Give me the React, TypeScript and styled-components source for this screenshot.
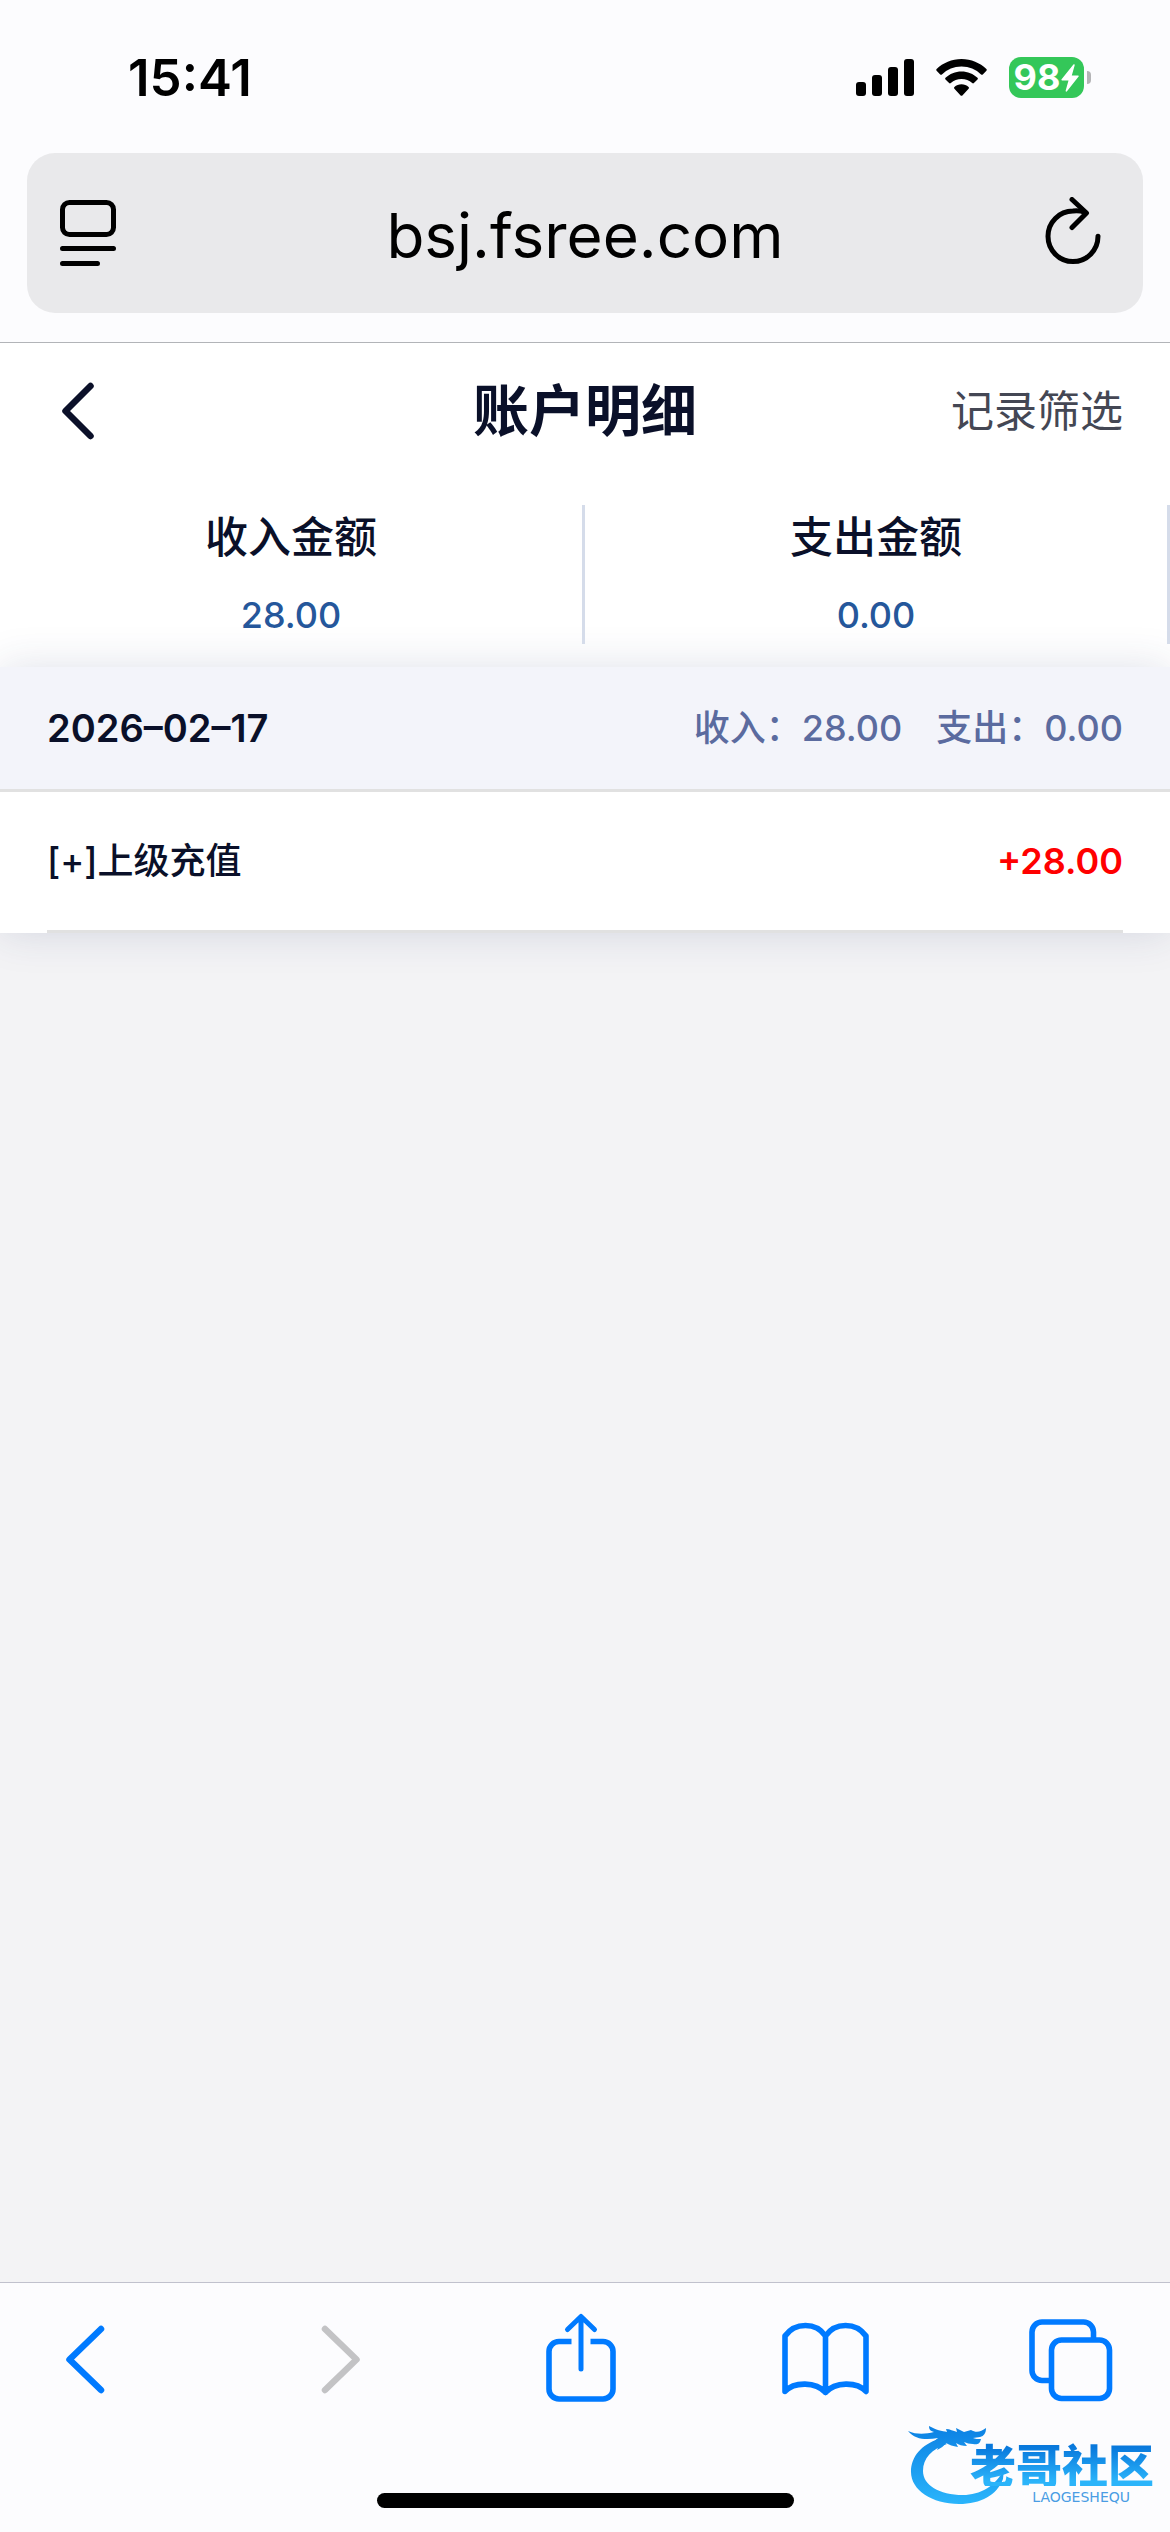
import React from "react";
import styled, { createGlobalStyle } from "styled-components";

const GlobalStyle = createGlobalStyle`
  *, *::before, *::after { box-sizing: border-box; }
  body {
    margin: 0;
    background: #f3f3f5;
    font-family: Inter, "Noto Sans CJK SC", sans-serif;
    color: #0a1029;
  }
  button, input {
    font: inherit;
    color: inherit;
    border: 0;
    padding: 0;
    margin: 0;
    background: none;
  }
  button { cursor: pointer; }
  svg { display: block; }
`;

const Screen = styled.div`
  position: relative;
  display: flex;
  flex-direction: column;
  min-height: 100vh;
`;

const BrowserTop = styled.header`
  background: #fcfcfe;
  border-bottom: 1px solid #b2b4b8;
  padding: 0 27px 29px;
`;

const StatusBar = styled.div`
  display: flex;
  align-items: center;
  justify-content: space-between;
  height: 153px;
  padding: 2px 52px 0 101px;
  color: #000;
`;

const Time = styled.time`
  font-size: 51px;
  line-height: 60px;
  font-weight: 600;
`;

const StatusIcons = styled.div`
  display: flex;
  align-items: center;
  gap: 22px;
`;

const BatteryWrap = styled.div`
  display: flex;
  align-items: center;
  gap: 3px;
`;

const Battery = styled.div`
  display: flex;
  align-items: center;
  justify-content: center;
  gap: 1px;
  width: 75px;
  height: 41px;
  border-radius: 12px;
  background: #34c759;
  color: #fff;
  font-size: 36px;
  line-height: 41px;
  font-weight: 700;
`;

const BatteryNub = styled.div`
  width: 4px;
  height: 13px;
  border-radius: 0 4px 4px 0;
  background: #b4b4b6;
`;

const AddressBar = styled.div`
  display: flex;
  align-items: center;
  height: 160px;
  padding: 0 42px 0 33px;
  border-radius: 28px;
  background: #e9e9eb;
  color: #000;
`;

const Address = styled.input`
  flex: 1;
  min-width: 0;
  height: 100px;
  padding: 4px 0 0 9px;
  font-size: 62px;
  line-height: 96px;
  text-align: center;
  outline: none;
`;

const Main = styled.main`
  flex: 1;
  background: #f3f3f5;
`;

const Top = styled.div`
  background: #fff;
`;

const PageHeader = styled.div`
  display: grid;
  grid-template-columns: 1fr auto 1fr;
  align-items: center;
  height: 136px;
  padding: 0 47px;
`;

const BackButton = styled.button`
  justify-self: start;
  padding-left: 14px;
`;

const Title = styled.h1`
  margin: 0;
  font-size: 56px;
  line-height: 72px;
  font-weight: 600;
`;

const FilterButton = styled.button`
  justify-self: end;
  font-size: 43px;
  line-height: 60px;
  color: #444754;
`;

const Stats = styled.dl`
  display: grid;
  grid-template-columns: 1fr 1fr;
  margin: 0;
  padding: 26px 0 23px;
`;

const Stat = styled.div`
  display: flex;
  flex-direction: column;
  align-items: center;
  gap: 30px;
  padding: 8px 0 5px;
  border-right: 3px solid #d5dcea;
`;

const StatLabel = styled.dt`
  font-size: 43px;
  line-height: 48px;
  font-weight: 500;
`;

const StatValue = styled.dd`
  margin: 0;
  font-size: 36px;
  line-height: 48px;
  font-weight: 500;
  color: #25579b;
`;

const DayCard = styled.section`
  background: #fff;
  box-shadow: 0 0 40px rgba(43, 57, 105, 0.15);
`;

const DayHeader = styled.div`
  display: flex;
  align-items: center;
  justify-content: space-between;
  height: 125px;
  padding: 0 47px;
  border-bottom: 3px solid #e1e1e1;
  background: #f3f4fa;
  font-size: 36px;
  line-height: 48px;
`;

const DayDate = styled.h2`
  margin: 0;
  font-size: 38px;
  font-weight: 600;
`;

const DayTotals = styled.div`
  display: flex;
  gap: 34px;
  font-weight: 500;
  color: #5b6b9f;
`;

const Records = styled.ul`
  margin: 0;
  padding: 0 47px;
  list-style: none;
`;

const RecordRow = styled.li`
  display: flex;
  align-items: center;
  justify-content: space-between;
  height: 141px;
  border-bottom: 3px solid #e1e1e1;
  font-size: 36px;
  line-height: 48px;
  font-weight: 500;
`;

const Amount = styled.span`
  font-weight: 600;
  color: #ff0000;
`;

const BrowserBottom = styled.footer`
  display: flex;
  flex-direction: column;
  align-items: center;
  justify-content: space-between;
  height: 250px;
  padding: 27px 0 24px;
  border-top: 1px solid #c0c1cd;
  background: #fcfcfe;
`;

const Toolbar = styled.nav`
  display: flex;
  align-self: stretch;
  justify-content: space-between;
  padding: 0 54px 0 40px;
`;

const ToolButton = styled.button<{ $muted?: boolean }>`
  color: ${(p) => (p.$muted ? "#c3c3c5" : "#007aff")};
`;

const HomeIndicator = styled.div`
  width: 417px;
  height: 15px;
  border-radius: 8px;
  background: #000;
`;

const Watermark = styled.div`
  position: absolute;
  right: 16px;
  bottom: 26px;
  width: 246px;
  height: 84px;
`;

const Dragon = styled.svg`
  position: absolute;
  left: 0;
  top: 0;
`;

const Brand = styled.div`
  position: relative;
  display: flex;
  flex-direction: column;
  align-items: flex-end;
  padding-top: 18px;
`;

const BrandName = styled.strong`
  font-family: "Noto Sans CJK SC", sans-serif;
  font-size: 46px;
  line-height: 46px;
  font-weight: 900;
  color: transparent;
  background: linear-gradient(#0878dc 15%, #2bb4fa 90%);
  background-clip: text;
  -webkit-background-clip: text;
`;

const BrandCaption = styled.span`
  padding: 4px 24px 0 0;
  font-family: "DejaVu Sans", sans-serif;
  font-size: 14px;
  line-height: 14px;
  color: #4a9de4;
`;

const SignalIcon = () => (
  <svg width="58" height="37" viewBox="0 0 58 37" fill="currentColor">
    <rect x="0" y="23" width="10" height="14" rx="3" />
    <rect x="16" y="16" width="10" height="21" rx="3" />
    <rect x="32" y="8" width="10" height="29" rx="3" />
    <rect x="48" y="0" width="10" height="37" rx="3" />
  </svg>
);

const WifiIcon = () => (
  <svg width="51" height="37" viewBox="0 0 51 37" fill="currentColor">
    <path d="M25.5 0C35.200 0 44 3.800 50.400 10.100c.5.5.5 1.200 0 1.700l-3.600 3.600c-.5.5-1.200.5-1.700 0A28 28 0 0 0 25.500 7.500 28 28 0 0 0 5.900 15.400c-.5.5-1.200.5-1.700 0L.6 11.800c-.5-.5-.5-1.200 0-1.700C7 3.800 15.800 0 25.500 0Z" />
    <path d="M25.500 12.500c6.200 0 11.800 2.400 16 6.300.5.500.5 1.200 0 1.700l-3.600 3.600c-.5.500-1.200.5-1.700 0a15.800 15.800 0 0 0-21.400 0c-.5.5-1.200.5-1.700 0l-3.600-3.600c-.5-.5-.5-1.200 0-1.700 4.200-3.900 9.800-6.300 16-6.300Z" />
    <path d="M25.500 25.300c2.700 0 5.200 1 7.100 2.700.5.500.5 1.200 0 1.700l-6.200 6.700c-.5.500-1.300.5-1.800 0l-6.200-6.700c-.5-.5-.5-1.200 0-1.700 1.900-1.700 4.400-2.700 7.100-2.700Z" />
  </svg>
);

const BoltIcon = () => (
  <svg width="18" height="28" viewBox="0 0 18 28" fill="currentColor">
    <path d="M12.400.6.600 15.200c-.5.700-.2 1.300.6 1.300h6.300L4.700 26.600c-.3 1 .7 1.500 1.300.7l11.600-14.700c.5-.7.200-1.200-.6-1.200h-6.200l2.900-10.200c.3-1-.7-1.400-1.300-.6Z" />
  </svg>
);

const ReaderIcon = () => (
  <svg width="56" height="66" viewBox="0 0 56 66" fill="none" stroke="currentColor" strokeWidth="5" strokeLinecap="round">
    <rect x="2.500" y="2.500" width="51" height="32" rx="7" />
    <path d="M2.500 48.500h51M2.500 63.500h35" />
  </svg>
);

const ReloadIcon = () => (
  <svg width="56" height="72" viewBox="0 0 56 72" fill="none" stroke="currentColor" strokeWidth="5" strokeLinecap="round" strokeLinejoin="round">
    <path d="M40 15.300A25 25.300 0 0 0 28 14 25 25.300 0 1 0 53 39.300" />
    <path d="M27 2.500 41.500 16 27 30.500" />
  </svg>
);

const BackIcon = () => (
  <svg width="34" height="58" viewBox="0 0 34 58" fill="none" stroke="#0b1029" strokeWidth="6.500" strokeLinecap="round" strokeLinejoin="round">
    <path d="M29.500 4 4.500 29l25 25" />
  </svg>
);

const ToolIcon = ({ children }: { children: React.ReactNode }) => (
  <svg width="90" height="100" viewBox="0 0 90 100" fill="none" stroke="currentColor" strokeWidth="5.600" strokeLinecap="round" strokeLinejoin="round">
    {children}
  </svg>
);

const DragonMark = () => (
  <Dragon width="110" height="84" viewBox="0 0 110 84">
    <defs>
      <linearGradient id="dragonBlue" x1="0" y1="0" x2="0" y2="84" gradientUnits="userSpaceOnUse">
        <stop offset="0" stopColor="#0a7ee2" />
        <stop offset="1" stopColor="#2bb6fc" />
      </linearGradient>
    </defs>
    <g fill="url(#dragonBlue)">
      <path d="M30 17C14 23 3 34 3 50c0 18 21 32 48 32 22 0 38-9 44-25l1-10C88 64 72 73 55 73 31 73 15 63 15 49c0-13 9-22 24-27Z" />
      <path d="M0 9c9 4 18 3 26 1-4-1-5-3-5-6 7 4 13 5 18 6l-1-3c4 0 7 2 11 3l-1-4 8 4 7-2c5 3 10 2 15-2 0 5-2 8-6 9l-7 1c2 1 5 1 8 1-1 5-4 6-8 5-4 0-6-1-9-2l3 4c-5 0-8-1-11-3l2 4c-5-1-9-2-12-4-2 3-5 5-9 7l3-7-8 1c2-3 4-4 6-6-11 2-23 2-30-7Z" />
    </g>
  </Dragon>
);

const stats = [
  { label: "收入金额", value: "28.00" },
  { label: "支出金额", value: "0.00" },
];

const records = [{ name: "[+]上级充值", amount: "+28.00" }];

export default function App() {
  return (
    <>
      <GlobalStyle />
      <Screen>
        <BrowserTop>
          <StatusBar>
            <Time>15:41</Time>
            <StatusIcons>
              <SignalIcon />
              <WifiIcon />
              <BatteryWrap>
                <Battery>
                  <span>98</span>
                  <BoltIcon />
                </Battery>
                <BatteryNub />
              </BatteryWrap>
            </StatusIcons>
          </StatusBar>
          <AddressBar>
            <button type="button" aria-label="阅读器">
              <ReaderIcon />
            </button>
            <Address type="text" aria-label="网址" defaultValue="bsj.fsree.com" />
            <button type="button" aria-label="刷新">
              <ReloadIcon />
            </button>
          </AddressBar>
        </BrowserTop>

        <Main>
          <Top>
            <PageHeader>
              <BackButton type="button" aria-label="返回">
                <BackIcon />
              </BackButton>
              <Title>账户明细</Title>
              <FilterButton type="button">记录筛选</FilterButton>
            </PageHeader>
            <Stats>
              {stats.map((s) => (
                <Stat key={s.label}>
                  <StatLabel>{s.label}</StatLabel>
                  <StatValue>{s.value}</StatValue>
                </Stat>
              ))}
            </Stats>
          </Top>
          <DayCard>
            <DayHeader>
              <DayDate>2026–02–17</DayDate>
              <DayTotals>
                <span>收入：28.00</span>
                <span>支出：0.00</span>
              </DayTotals>
            </DayHeader>
            <Records>
              {records.map((r) => (
                <RecordRow key={r.name}>
                  <span>{r.name}</span>
                  <Amount>{r.amount}</Amount>
                </RecordRow>
              ))}
            </Records>
          </DayCard>
        </Main>

        <BrowserBottom>
          <Toolbar>
            <ToolButton type="button" aria-label="后退">
              <ToolIcon>
                <path strokeWidth="6.500" d="M61 19 29.500 49.500 61 80" />
              </ToolIcon>
            </ToolButton>
            <ToolButton type="button" aria-label="前进" $muted>
              <ToolIcon>
                <path strokeWidth="6.500" d="M38 19 69.500 49.500 38 80" />
              </ToolIcon>
            </ToolButton>
            <ToolButton type="button" aria-label="分享">
              <ToolIcon>
                <path strokeLinecap="butt" d="M38.500 31.500H26a10 10 0 0 0-10 10V79a10 10 0 0 0 10 10h44a10 10 0 0 0 10-10V41.500a10 10 0 0 0-10-10H57.500" />
                <path strokeWidth="5" d="M48 59V7M34.500 19.500 48 6.500l13.500 13" />
              </ToolIcon>
            </ToolButton>
            <ToolButton type="button" aria-label="书签">
              <ToolIcon>
                <path d="M45.500 82.500V26C36 12 15 12 5 26v55.500c9-10 31-10 40.500 1 9.500-11 31.500-11 40.500-1V26C76 12 55 12 45.500 26" />
              </ToolIcon>
            </ToolButton>
            <ToolButton type="button" aria-label="标签页">
              <ToolIcon>
                <path strokeLinecap="butt" d="M24 70.500H16a10 10 0 0 1-10-10V22a10 10 0 0 1 10-10h41.500a10 10 0 0 1 10 10v8" />
                <rect x="25.500" y="30" width="58" height="58.500" rx="10" />
              </ToolIcon>
            </ToolButton>
          </Toolbar>
          <HomeIndicator />
        </BrowserBottom>

        <Watermark>
          <DragonMark />
          <Brand>
            <BrandName>老哥社区</BrandName>
            <BrandCaption>LAOGESHEQU</BrandCaption>
          </Brand>
        </Watermark>
      </Screen>
    </>
  );
}
